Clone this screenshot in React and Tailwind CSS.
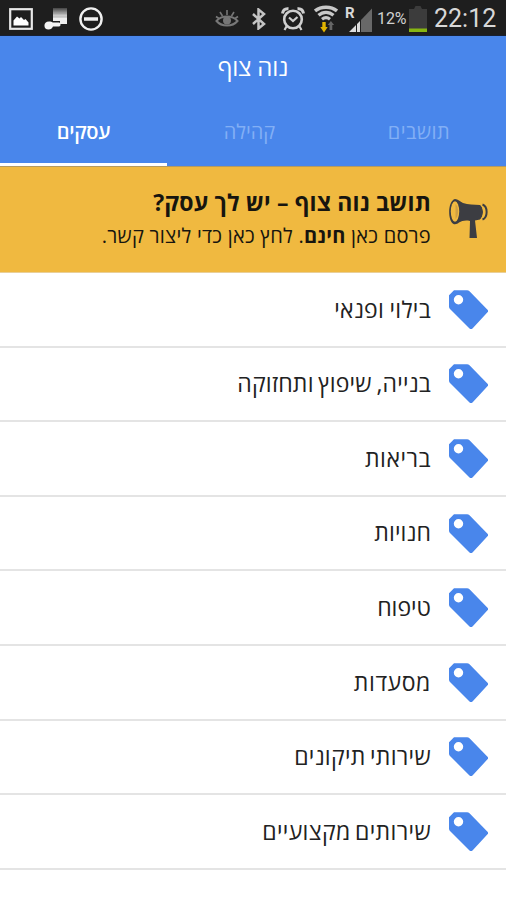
const categories = [
  { label: 'בילוי ופנאי', spacing: 'tracking-[0.3px] [word-spacing:-1px]' },
  { label: 'בנייה, שיפוץ ותחזוקה', spacing: 'tracking-[0.2px] [word-spacing:-1.5px]' },
  { label: 'בריאות', spacing: 'tracking-[0.5px]' },
  { label: 'חנויות', spacing: 'tracking-[0.1px]' },
  { label: 'טיפוח', spacing: 'tracking-normal' },
  { label: 'מסעדות', spacing: 'tracking-[0.6px]' },
  { label: 'שירותי תיקונים', spacing: 'tracking-[0.3px] [word-spacing:-2px]' },
  { label: 'שירותים מקצועיים', spacing: 'tracking-[0.35px] [word-spacing:-2px]' }
];

function PictureIcon() {
  return (
    <svg className="w-6 h-[22px]" viewBox="0 0 24 22" fill="none">
      <rect x="1.2" y="1.2" width="21.6" height="19.6" stroke="#e8e8e8" strokeWidth="2.2" />
      <path d="M4.5 17.5v-5l3.5-4 2.5 2 1.5-1.5 3 3 1.5-1 3 3.5v3z" fill="#fff" />
    </svg>
  );
}

function MusicIcon() {
  return (
    <svg className="w-6 h-6" viewBox="0 0 24 24">
      <defs>
        <linearGradient id="note" x1="0" y1="0" x2="0" y2="1">
          <stop offset="0" stopColor="#444" />
          <stop offset="0.6" stopColor="#eee" />
        </linearGradient>
      </defs>
      <path d="M9 1h14v16H16v-3H9z" fill="url(#note)" />
      <path d="M9 6h14M9 10h14" stroke="#999" strokeWidth="0.7" />
      <path d="M5 14.5c2 0 3 .5 4 1h6c2 0 2 4 0 4H9c-1 2-2 3-4.500 3-5.500 0-5.500-8 .500-8z" fill="#f4f4f4" />
    </svg>
  );
}

function BlockIcon() {
  return (
    <svg className="w-6 h-6" viewBox="0 0 24 24" fill="none" stroke="#f0f0f0">
      <circle cx="12" cy="12" r="10.6" strokeWidth="2.4" />
      <path d="M5 12h14" strokeWidth="3.5" />
    </svg>
  );
}

function EyeIcon() {
  return (
    <svg className="w-6 h-5" viewBox="0 0 24 20" fill="none" stroke="#777" strokeWidth="2">
      <path d="M1.5 12c5-6 16-6 21 0-5 6-16 6-21 0z" />
      <path d="M12 1v5M5 3l2.500 4M19 3l-2.500 4M1 7.500l3 2M23 7.500l-3 2" strokeWidth="1.6" />
      <circle cx="12" cy="11.5" r="3" fill="#777" />
    </svg>
  );
}

function BluetoothIcon() {
  return (
    <svg className="w-4 h-[22px]" viewBox="0 0 16 22" fill="none" stroke="#c4c4c4" strokeWidth="2.5">
      <path d="M2 6l11 10-5.500 4.500v-19L13 6 2 16" />
    </svg>
  );
}

function AlarmIcon() {
  return (
    <svg className="w-6 h-6" viewBox="0 0 24 24" fill="none" stroke="#cfcfcf">
      <circle cx="12" cy="12.5" r="8.8" strokeWidth="2.6" />
      <path d="M1.500 6.500C2 3 4.500 1.500 7.500 1.800M22.500 6.500C22 3 19.500 1.500 16.500 1.800" strokeWidth="3" />
      <path d="M8 10.500l4 3.500 4.500-4M5.500 19.500L3.500 23M18.500 19.500l2 3.500" strokeWidth="2.2" />
    </svg>
  );
}

function WifiIcon() {
  return (
    <svg className="w-6 h-7" viewBox="0 0 24 28" fill="none" stroke="#c8c8c8">
      <path d="M1 6C7 1 17 1 23 6" strokeWidth="3.4" />
      <path d="M4.5 10.300c4.500-4 10.500-4 15 0" strokeWidth="3.2" />
      <path d="M8 14.300c2.500-2 5.500-2 8 0" strokeWidth="3.2" />
      <path d="M8.300 17h3.400v5h2L10 27.500 6.300 22h2z" fill="#e2b500" stroke="none" />
      <path d="M15.500 25v-5h-1.800l3.200-4 3.200 4h-1.800v5z" fill="#666" stroke="none" />
    </svg>
  );
}

function SignalIcon() {
  return (
    <svg className="w-7 h-7" viewBox="0 0 28 28">
      <path d="M4 27l7-7v7zM12 19l3-3v11h-3z" fill="#ddd" />
      <path d="M16 15L27 3.500V27H16z" fill="#686868" />
      <text x="0" y="13" fill="#d8d8d8" fontSize="15" fontWeight="700" fontFamily="Roboto, sans-serif">R</text>
    </svg>
  );
}

function BatteryIcon() {
  return (
    <svg className="w-[18px] h-[26px]" viewBox="0 0 18 26">
      <path d="M0 3h5l1.500-3h5L13 3h5v23H0z" fill="#3c3c3c" />
      <path d="M0 22.500h18V26H0z" fill="#87b512" />
    </svg>
  );
}

function StatusBar() {
  return (
    <div dir="ltr" className="h-9 flex items-center justify-between bg-[#1e1e1e] pl-[9px] pr-[10px] pt-0.5 border-b border-[#172033]">
      <div className="flex items-center gap-[11px]">
        <PictureIcon />
        <MusicIcon />
        <BlockIcon />
      </div>
      <div className="flex items-center font-['Roboto',sans-serif]">
        <EyeIcon />
        <span className="w-[12px]" />
        <BluetoothIcon />
        <span className="w-[14px]" />
        <AlarmIcon />
        <span className="w-[9px]" />
        <WifiIcon />
        <span className="w-[7px]" />
        <SignalIcon />
        <span className="w-8 ml-1 text-base tracking-[-0.1px] text-[#d0d0d0]">12%</span>
        <BatteryIcon />
        <span className="ml-[7px] w-[62px] whitespace-nowrap text-[25px] leading-none text-[#d8d8d8]">22:12</span>
      </div>
    </div>
  );
}

function Header() {
  return (
    <header className="bg-[#4986eb]">
      <h1 className="h-[61px] text-center text-[24px] leading-[61px] tracking-[-0.2px] text-white">נוה צוף</h1>
      <nav className="flex h-[69px] text-center text-[20px] leading-[70px] text-[#82aff5]">
        <div className="w-[174px] tracking-[0.5px]">תושבים</div>
        <div className="w-[165px]">קהילה</div>
        <div className="w-[167px] border-b-[3px] border-white font-semibold tracking-[-0.3px] text-white">עסקים</div>
      </nav>
    </header>
  );
}

function MegaphoneIcon() {
  return (
    <svg className="w-10 h-10" viewBox="0 0 40 40" fill="#3c3d42">
      <path d="M7 0c3 0 5 2.500 8 4 5 1.800 11 1.500 17 2 4 3 4 11 0 14.500l-5 1 2 17.500h-7.500L22 22c-5-1-8 0-11 1.500C9.500 25 7.500 25.500 5.500 25-.5 22-.5 2 7 0z" />
      <ellipse cx="7" cy="12.500" rx="4.200" ry="10.300" fill="#f0b940" />
      <path d="M7.500 5c3.500 3 3.500 12 0 15z" fill="#cfa044" />
      <path d="M34.500 5.500c5.500 2 5.500 13 0 15" fill="none" stroke="#3c3d42" strokeWidth="2" />
      <path d="M32.500 5.500c4 3 4 12 0 15" fill="none" stroke="#f0b940" strokeWidth="1" />
    </svg>
  );
}

function TagIcon() {
  return (
    <svg className="w-10 h-10 shrink-0" viewBox="0 0 40 40" fill="#4986eb">
      <path
        fillRule="evenodd"
        d="M6 1.300h13q1.500 0 2.500 1l18 18.500q1.300 1.200 0 2.500L24.500 39.500q-1.500 1.300-3 0L2 20q-1-1-1-2.500V6.300l5-5zM10.500 6a4.700 4.700 0 1 0 0 9.400 4.700 4.700 0 0 0 0-9.400z"
      />
    </svg>
  );
}

function Banner() {
  return (
    <section className="flex h-[107px] bg-[#f0b940] border-t border-t-[#b39a62] border-b border-b-[#e9cf98] pr-[18px] text-[#17150f]">
      <div className="pt-[32px]">
        <MegaphoneIcon />
      </div>
      <div className="mr-[17px] pt-[18px] whitespace-nowrap">
        <p className="text-[23px] leading-[34px] font-bold tracking-[0.16px]">תושב נוה צוף – יש לך עסק?</p>
        <p className="text-[20px] leading-[34px] tracking-[0.25px]">
          פרסם כאן <b>חינם</b>. לחץ כאן כדי ליצור קשר.
        </p>
      </div>
    </section>
  );
}

export default function App() {
  return (
    <div dir="rtl" className="w-[506px] h-[900px] overflow-hidden bg-white font-['Open_Sans',sans-serif]">
      <StatusBar />
      <Header />
      <Banner />
      <ul>
        {categories.map(({ label, spacing }) => (
          <li key={label} className="flex h-[74.6px] items-center border-b-2 border-[#e4e4e4] pr-[18px] pb-px text-[23px] text-[#222]">
            <TagIcon />
            <span className={`mr-[17px] whitespace-nowrap ${spacing}`}>{label}</span>
          </li>
        ))}
      </ul>
    </div>
  );
}
